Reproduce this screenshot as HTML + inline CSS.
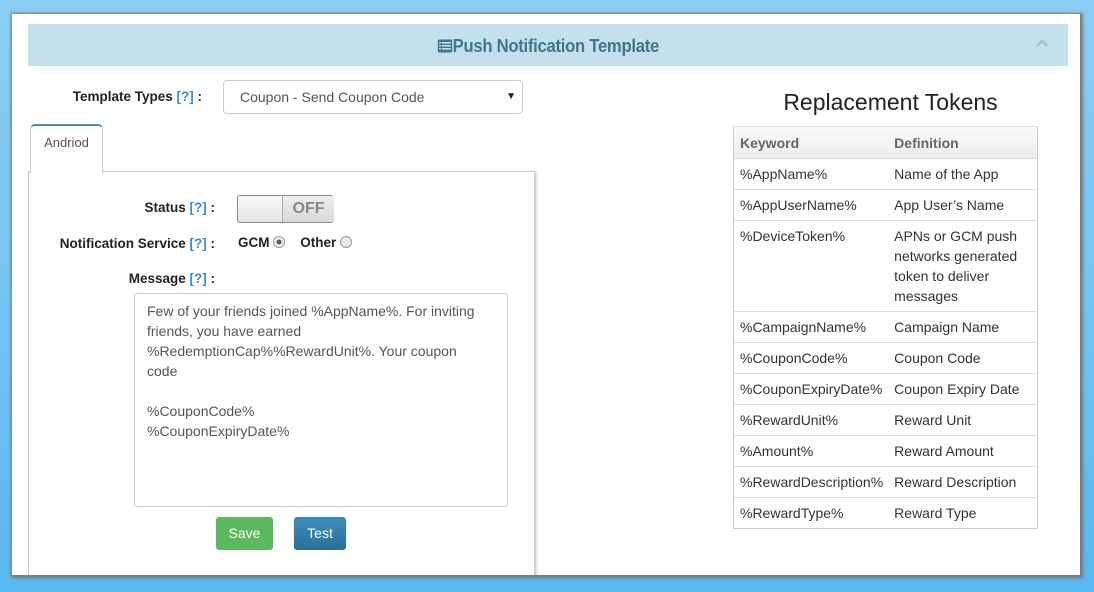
<!DOCTYPE html>
<html><head><style>
body{margin:0;width:1094px;height:592px;overflow:hidden;background:linear-gradient(#8ccff5,#5ab8f0);font-family:"Liberation Sans",sans-serif;position:relative}
.panel{position:absolute;left:12px;top:14px;width:1068px;height:561px;background:#fff;box-shadow:1px 1px 3px 2px #777;overflow:hidden}
.abs{position:absolute}
.hdr{left:16px;top:10px;width:1040px;height:42px;background:#c4e0ea;}
.hdr .t{position:absolute;left:0;right:0;top:11px;text-align:center;}
.hdr .t span{display:inline-block;color:#3d7890;font-weight:bold;font-size:18.5px;letter-spacing:-0.3px;transform:scaleX(0.9)}
.lbl{font-weight:bold;font-size:13.5px;color:#222;text-align:right}
.q{color:#3a8fd0}
table{border-collapse:collapse;font-size:14px;color:#333;border:1px solid #ccc}
td{border-top:1px solid #ddd;padding:0 6px;vertical-align:top}
</style></head><body>
<div class="panel">
 <div class="abs hdr"><div class="t"><span><svg width="17" height="14" viewBox="0 0 17 14" style="vertical-align:-1px"><rect x="0.5" y="0.5" width="16" height="13" rx="1.5" fill="#3d7890"/><rect x="2" y="3" width="2" height="1.6" fill="#c4e0ea"/><rect x="5" y="3" width="10" height="1.6" fill="#c4e0ea"/><rect x="2" y="6" width="2" height="1.6" fill="#c4e0ea"/><rect x="5" y="6" width="10" height="1.6" fill="#c4e0ea"/><rect x="2" y="9" width="2" height="1.6" fill="#c4e0ea"/><rect x="5" y="9" width="10" height="1.6" fill="#c4e0ea"/></svg>Push Notification Template</span></div>
 <svg class="abs" style="left:1007px;top:14px" width="14" height="10"><path d="M2 8 L7 3 L12 8" stroke="#9fc4d2" stroke-width="2.5" fill="none"/></svg></div>

 <div class="abs lbl" style="left:30px;top:75px;width:160px">Template Types <span class="q">[?]</span> :</div>
 <div class="abs" style="left:211px;top:66px;height:32px;border:1px solid #ccc;border-radius:4px;font-size:14px;color:#555;line-height:32px;padding-left:16px;width:282px">Coupon - Send Coupon Code<span style="position:absolute;right:6px;top:0;font-size:10px;color:#222">▼</span></div>

 <div class="abs" style="left:18px;top:110px;width:71px;height:48px;border:1px solid #ccc;border-top:2px solid #4a8bb8;border-bottom:none;border-radius:5px 5px 0 0;background:#fff;z-index:2;font-size:13px;color:#555;text-align:center;line-height:34px">Andriod</div>
 <div class="abs" style="left:16px;top:157px;width:505px;height:420px;border:1px solid #ccc;box-shadow:1px 1px 3px #bbb"></div>

 <div class="abs lbl" style="left:30px;top:186px;width:173px">Status <span class="q">[?]</span> :</div>
 <div class="abs" style="left:225px;top:181px;width:95px;height:26px;border:1px solid #888;border-radius:3px;background:linear-gradient(#fafafa,#e4e4e4)"><div class="abs" style="left:44px;top:0;width:51px;height:26px;border-left:1px solid #aaa;background:linear-gradient(#eee,#d8d8d8);font-weight:bold;font-size:16px;color:#888;text-align:center;line-height:26px">OFF</div></div>
 <div class="abs lbl" style="left:10px;top:222px;width:193px">Notification Service <span class="q">[?]</span> :</div>
 <div class="abs lbl" style="left:226px;top:221px;text-align:left">GCM <span style="display:inline-block;width:10px;height:10px;border:1px solid #999;border-radius:50%;background:radial-gradient(#555 30%,#eee 40%);vertical-align:-1px"></span>&nbsp;&nbsp;&nbsp;&nbsp;Other <span style="display:inline-block;width:10px;height:10px;border:1px solid #999;border-radius:50%;background:#e8e8e8;vertical-align:-1px"></span></div>
 <div class="abs lbl" style="left:30px;top:257px;width:173px">Message <span class="q">[?]</span> :</div>
 <div class="abs" style="left:122px;top:279px;width:374px;height:214px;border:1px solid #ccc;border-radius:3px;font-size:14px;color:#555;line-height:20px;padding:7px 30px 8px 12px;box-sizing:border-box">Few of your friends joined %AppName%. For inviting friends, you have earned %RedemptionCap%%RewardUnit%. Your coupon code<br><br>%CouponCode%<br>%CouponExpiryDate%</div>
 <div class="abs" style="left:204px;top:503px;width:57px;height:33px;background:#5cb85c;border-radius:3px;color:#fff;font-size:14px;text-align:center;line-height:33px">Save</div>
 <div class="abs" style="left:282px;top:503px;width:52px;height:33px;background:linear-gradient(#3a8fb8,#2a6f98);border-radius:3px;color:#fff;font-size:14px;text-align:center;line-height:33px">Test</div>

 <div class="abs" style="left:722px;top:75px;width:313px;text-align:center;font-size:23px;color:#222">Replacement Tokens</div>
 <table class="abs" style="left:721px;top:112px;width:305px">
 <tr style="height:32px;background:linear-gradient(#fafafa,#ececec);font-weight:bold;color:#666"><td style="width:141px;vertical-align:middle">Keyword</td><td style="vertical-align:middle;padding-left:5px">Definition</td></tr>
 <tr style="height:31px"><td style="padding-top:7px">%AppName%</td><td style="padding-top:7px;padding-left:5px">Name of the App</td></tr>
 <tr style="height:31px"><td style="padding-top:7px">%AppUserName%</td><td style="padding-top:7px;padding-left:5px">App User’s Name</td></tr>
 <tr style="height:91px"><td style="padding-top:7px">%DeviceToken%</td><td style="padding-top:5px;line-height:20px;padding-left:5px">APNs or GCM push networks generated token to deliver messages</td></tr>
 <tr style="height:31px"><td style="padding-top:7px">%CampaignName%</td><td style="padding-top:7px;padding-left:5px">Campaign Name</td></tr>
 <tr style="height:31px"><td style="padding-top:7px">%CouponCode%</td><td style="padding-top:7px;padding-left:5px">Coupon Code</td></tr>
 <tr style="height:31px"><td style="padding-top:7px">%CouponExpiryDate%</td><td style="padding-top:7px;padding-left:5px">Coupon Expiry Date</td></tr>
 <tr style="height:31px"><td style="padding-top:7px">%RewardUnit%</td><td style="padding-top:7px;padding-left:5px">Reward Unit</td></tr>
 <tr style="height:31px"><td style="padding-top:7px">%Amount%</td><td style="padding-top:7px;padding-left:5px">Reward Amount</td></tr>
 <tr style="height:31px"><td style="padding-top:7px">%RewardDescription%</td><td style="padding-top:7px;padding-left:5px">Reward Description</td></tr>
 <tr style="height:31px"><td style="padding-top:7px">%RewardType%</td><td style="padding-top:7px;padding-left:5px">Reward Type</td></tr>
 </table>
</div>
</body></html>
